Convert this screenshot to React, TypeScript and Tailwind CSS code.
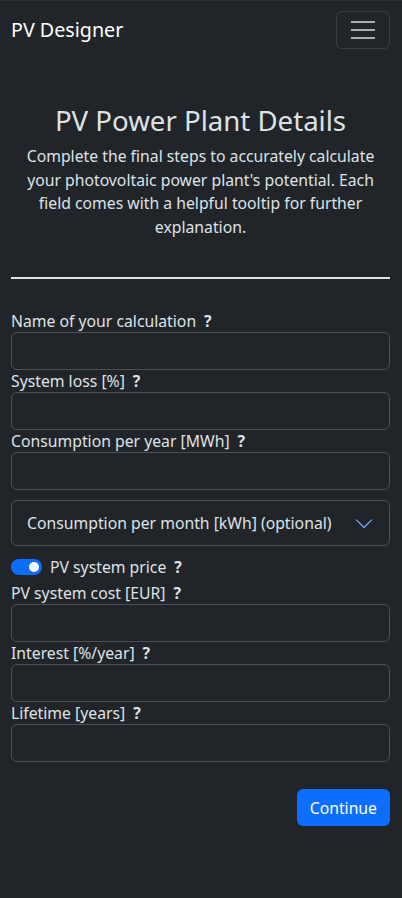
import { useState } from 'react'

const fields = [
  'Name of your calculation',
  'System loss [%]',
  'Consumption per year [MWh]',
]

const priceFields = ['PV system cost [EUR]', 'Interest [%/year]', 'Lifetime [years]']

function Field({ label }: { label: string }) {
  return (
    <div>
      <label className="block h-[22px] leading-[22px]">
        {label}
        <span className="ml-[8px] font-bold">?</span>
      </label>
      <input
        type="text"
        className="block w-full h-[38px] rounded-[6px] border border-[#495057] bg-[#212529] px-3 outline-none"
      />
    </div>
  )
}

export default function App() {
  const [priceOn, setPriceOn] = useState(true)

  return (
    <div
      className="min-h-[898px] bg-[#212529] text-[#dee2e6] text-[15.75px] leading-[24px]"
      style={{ fontFamily: '"Noto Sans", sans-serif' }}
    >
      {/* Navbar */}
      <nav className="flex items-center justify-between h-[58px] pl-[11px] pr-[12px] border-t border-[#2e3236]">
        <span className="text-[19.7px] text-white">PV Designer</span>
        <button className="flex flex-col items-center justify-center gap-[6px] w-[54px] h-[38px] rounded-[6px] border border-[#3a3f44]">
          <span className="block w-[24px] h-[2px] bg-[#a9adb1]" />
          <span className="block w-[24px] h-[2px] bg-[#a9adb1]" />
          <span className="block w-[24px] h-[2px] bg-[#a9adb1]" />
        </button>
      </nav>

      <main className="pl-[11px] pr-[12px]">
        {/* Header */}
        <div className="pt-[45px] text-center">
          <h1 className="text-[27.6px] leading-[34px] text-[#dee2e6]">PV Power Plant Details</h1>
          <p className="mt-[8px] px-[5px] leading-[23.5px]">
            Complete the final steps to accurately calculate your photovoltaic power plant's potential. Each
            field comes with a helpful tooltip for further explanation.
          </p>
        </div>

        <hr className="mt-[38px] border-0 h-[2px] bg-[#dee2e6]" />

        {/* Form */}
        <div className="mt-[31px]">
          {fields.map((f) => (
            <Field key={f} label={f} />
          ))}

          <div className="mt-[10px] flex items-center justify-between h-[46px] rounded-[6px] border border-[#495057] pl-[15px] pr-[16px]">
            <span>Consumption per month [kWh] (optional)</span>
            <svg width="18" height="18" viewBox="0 0 16 16" fill="none" stroke="#6ea8fe" strokeWidth="1.2">
              <path d="M1 5l7 7 7-7" />
            </svg>
          </div>

          <div className="mt-[9px] mb-[3px] flex items-center h-[24px]">
            <button
              onClick={() => setPriceOn(!priceOn)}
              className={
                'relative w-[31px] h-[16px] rounded-full ' + (priceOn ? 'bg-[#0d6efd]' : 'bg-[#495057]')
              }
            >
              <span
                className={
                  'absolute top-[3px] w-[10px] h-[10px] rounded-full bg-white ' +
                  (priceOn ? 'right-[3px]' : 'left-[3px]')
                }
              />
            </button>
            <span className="ml-[8px]">
              PV system price<span className="ml-[8px] font-bold">?</span>
            </span>
          </div>

          {priceOn &&
            priceFields.map((f) => (
              <Field key={f} label={f} />
            ))}

          <div className="mt-[27px] flex justify-end">
            <button className="h-[37px] px-[13px] rounded-[6px] bg-[#0d6efd] text-white">Continue</button>
          </div>
        </div>
      </main>
    </div>
  )
}
